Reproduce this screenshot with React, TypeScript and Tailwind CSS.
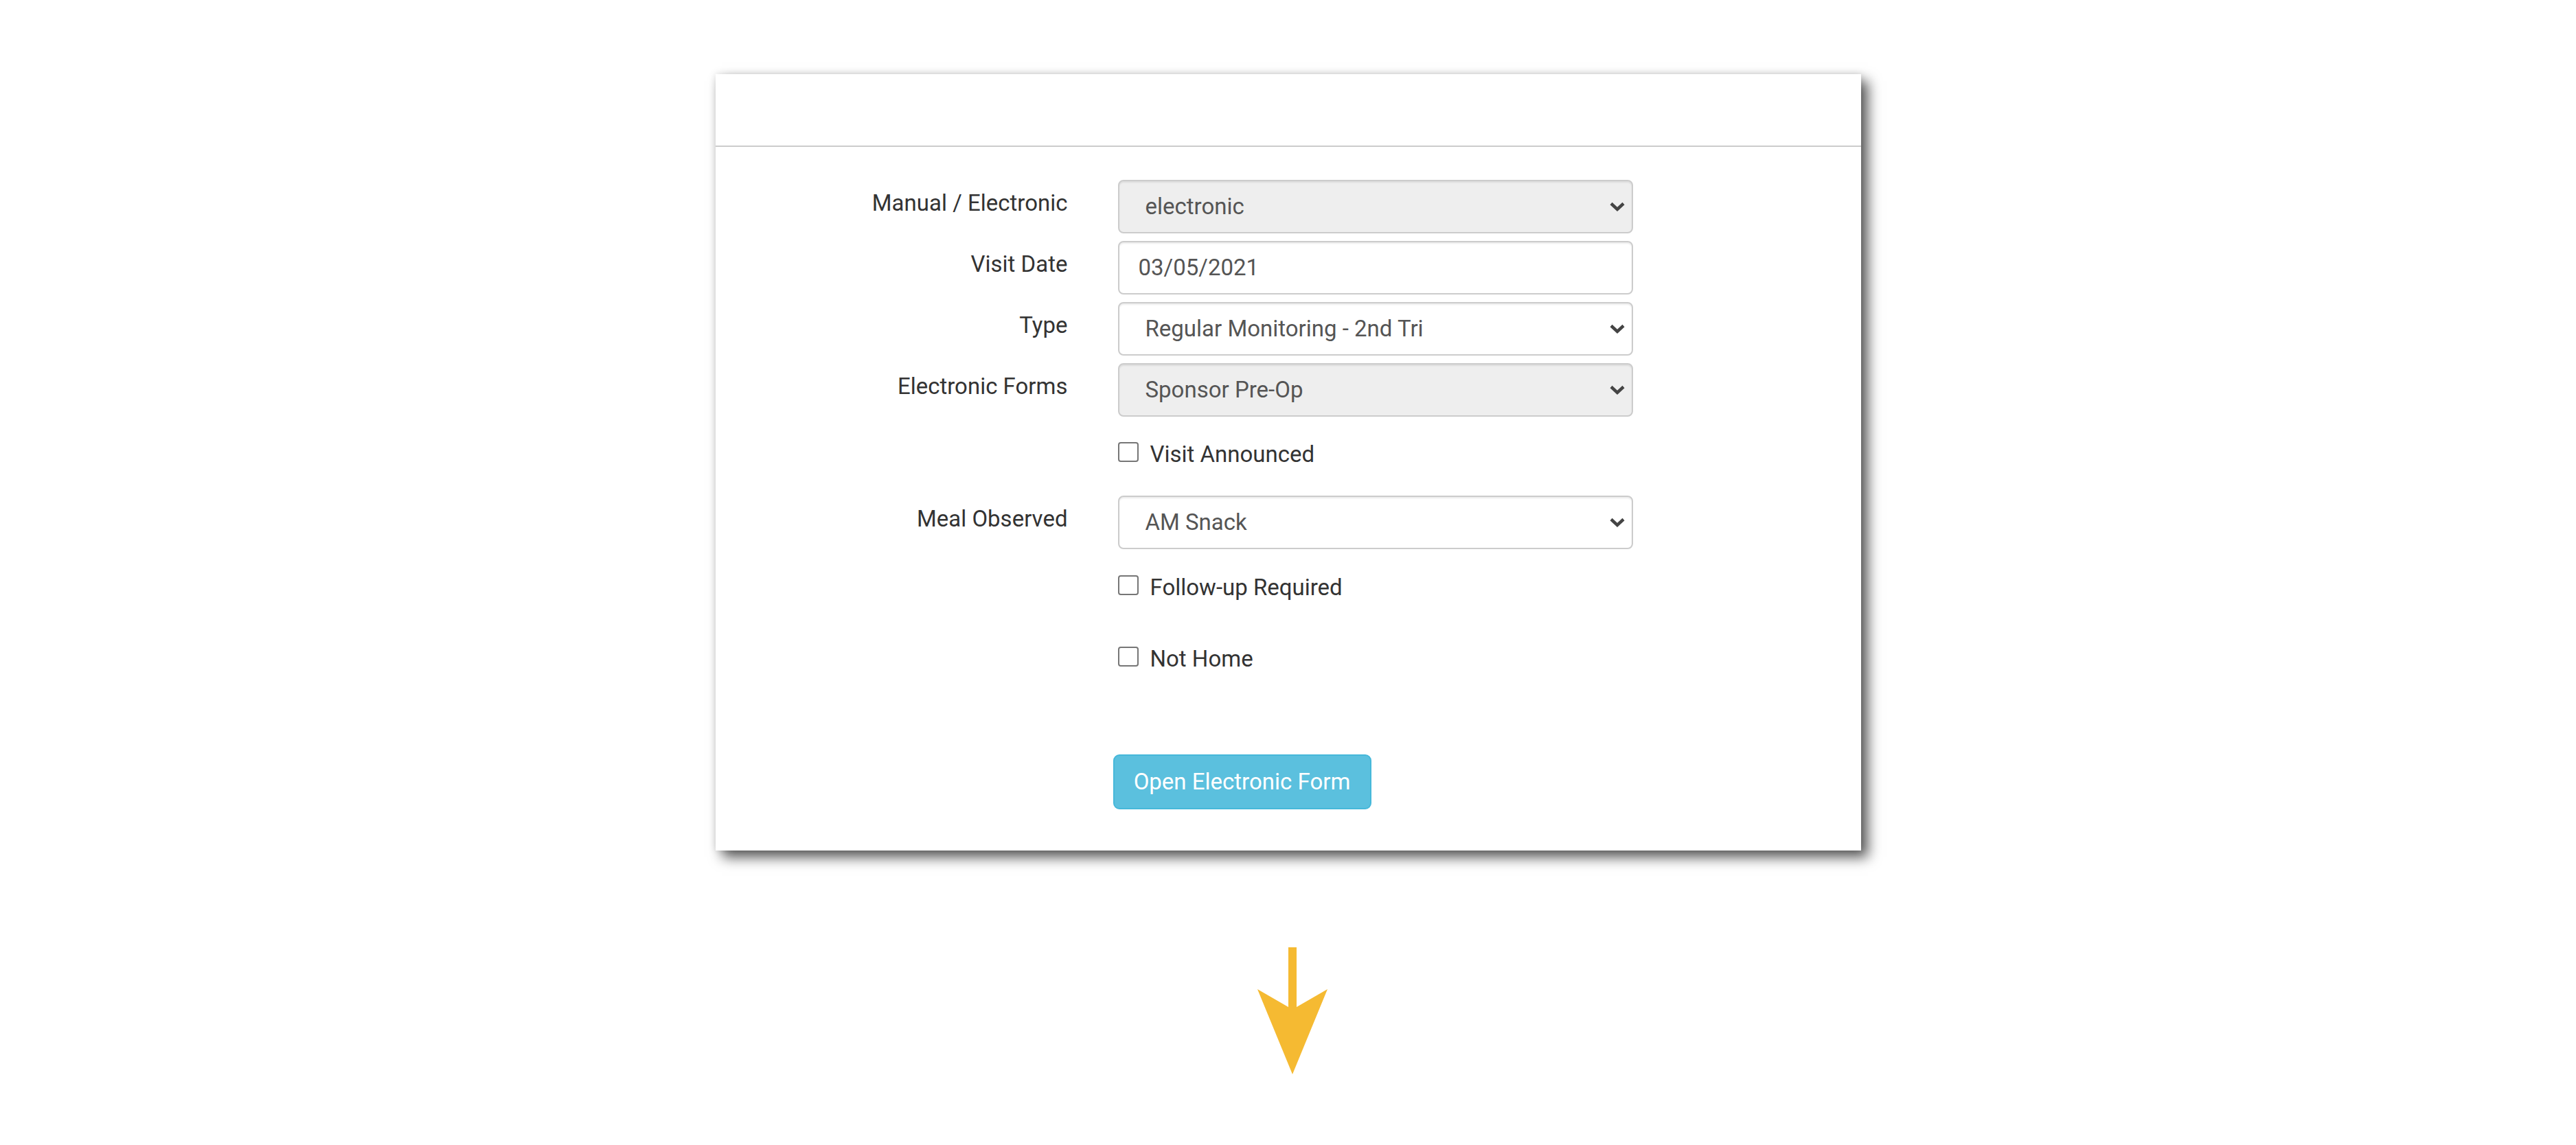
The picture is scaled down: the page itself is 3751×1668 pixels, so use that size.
import React from "react";

function Chevron() {
  return (
    <svg width="24" height="16" viewBox="0 0 24 16" className="shrink-0">
      <path d="M3 3.5l9 8.5 9-8.5" fill="none" stroke="#444444" strokeWidth="4.5" />
    </svg>
  );
}

function SelectBox({ value, disabled }: { value: string; disabled?: boolean }) {
  return (
    <div
      className={
        disabled
          ? "flex h-[78px] w-[750px] items-center justify-between rounded-[8px] border-2 border-[#cccccc] bg-[#eeeeee] pl-[38px] pr-[9px] text-[33px] text-[#555555] shadow-[inset_0_2px_2px_rgba(0,0,0,0.08)]"
          : "flex h-[78px] w-[750px] items-center justify-between rounded-[8px] border-2 border-[#cccccc] bg-white pl-[38px] pr-[9px] text-[33px] text-[#555555] shadow-[inset_0_2px_2px_rgba(0,0,0,0.08)]"
      }
    >
      <span>{value}</span>
      <Chevron />
    </div>
  );
}

function Row({ label, children, className }: { label: string; children: React.ReactNode; className?: string }) {
  return (
    <div className={"flex " + (className ?? "")}>
      <div className="w-[513px] pt-[14px] text-right text-[33px] leading-[40px] text-[#333333]">{label}</div>
      <div className="ml-[73px]">{children}</div>
    </div>
  );
}

function Check({ label, className }: { label: string; className?: string }) {
  return (
    <div className={"flex h-[34px] items-center pl-[586px] " + (className ?? "")}>
      <span className="mb-[8px] h-[29px] w-[30px] rounded-[4px] border-2 border-[#767676] bg-white" />
      <span className="ml-[17px] text-[33px] leading-[34px] text-[#333333]">{label}</span>
    </div>
  );
}

export default function App() {
  return (
    <div className="min-h-screen w-full bg-white pt-[108px] font-['Roboto',sans-serif]">
      <div className="mx-auto w-[1668px] bg-white shadow-[10px_10px_18px_rgba(0,0,0,0.65),0_0_10px_rgba(0,0,0,0.12)]">
        <div className="h-[106px] border-b-2 border-[#cccccc]" />
        <div className="flex flex-col pt-[48px] pb-[60px]">
          <Row label="Manual / Electronic">
            <SelectBox value="electronic" disabled />
          </Row>
          <Row label="Visit Date" className="mt-[11px]">
            <div className="flex h-[78px] w-[750px] items-center rounded-[8px] border-2 border-[#cccccc] bg-white pl-[28px] text-[33px] text-[#555555] shadow-[inset_0_2px_2px_rgba(0,0,0,0.08)]">
              03/05/2021
            </div>
          </Row>
          <Row label="Type" className="mt-[11px]">
            <SelectBox value="Regular Monitoring - 2nd Tri" />
          </Row>
          <Row label="Electronic Forms" className="mt-[11px]">
            <SelectBox value="Sponsor Pre-Op" disabled />
          </Row>
          <Check label="Visit Announced" className="mt-[38px]" />
          <Row label="Meal Observed" className="mt-[43px]">
            <SelectBox value="AM Snack" />
          </Row>
          <Check label="Follow-up Required" className="mt-[39px]" />
          <Check label="Not Home" className="mt-[70px]" />
          <div className="mt-[122px] pl-[579px]">
            <button className="h-[80px] w-[376px] rounded-[9px] border-2 border-[#46b8da] bg-[#5bc0de] text-[33px] text-white">
              Open Electronic Form
            </button>
          </div>
        </div>
      </div>
      <div className="mt-[141px] flex justify-center">
        <svg width="102" height="186" viewBox="0 0 102 186" className="ml-[13px]">
          <polygon points="45,0 57,0 57,87 102,61 51,185 0,61 45,87" fill="#f5ba32" />
        </svg>
      </div>
    </div>
  );
}
